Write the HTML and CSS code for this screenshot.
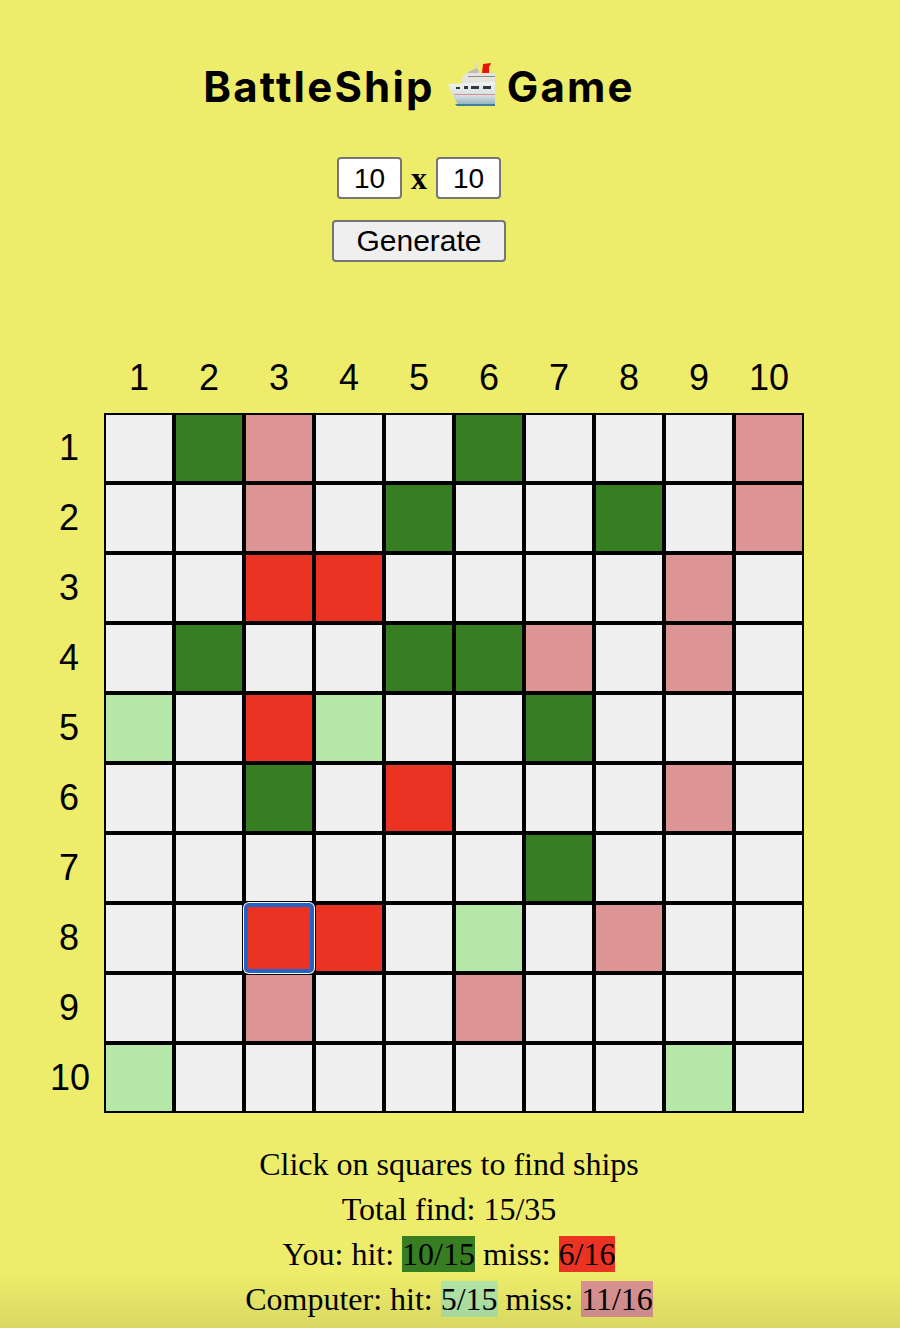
FILE: index.html
```html
<!DOCTYPE html>
<html lang="en">
<head>
    <meta charset="UTF-8">
    <meta name="viewport" content="width=device-width, initial-scale=1.0">
    <title>BattleShip Game</title>
    <link rel="stylesheet" href="styles.css">
</head>
<body>

    <div id="container-game">
        <h1 id="title">
            <span>BattleShip</span>
            <svg id="ship" viewBox="0 0 60 60" width="60" height="60" aria-hidden="true">
                <defs>
                    <linearGradient id="hull" x1="0" y1="0" x2="0" y2="1">
                        <stop offset="0" stop-color="#f1f3f3"/>
                        <stop offset="0.6" stop-color="#d5dfe2"/>
                        <stop offset="1" stop-color="#8fb0bd"/>
                    </linearGradient>
                </defs>
                <path d="M29 17 L33 6 L34 7 L32 17 Z" fill="#d9d9c8"/>
                <path d="M24 17 L33 13 L35 17 L35 22 L24 22 Z" fill="#bdbdb2"/>
                <path d="M39 9 L47 8 L46 11 L45 11 L45 18 L38 18 Z" fill="#e8140c"/>
                <path d="M18 23 L22 18 L51 18 L51 29 L18 29 Z" fill="#e4e4dc"/>
                <path d="M24 21 H51 V22 H24 Z" fill="#8d8d86"/>
                <path d="M4 29 L51 27 L51 50 L14 50 Q8 40 4 29 Z" fill="url(#hull)"/>
                <path d="M11 49 H51 V51 H13 Z" fill="#3f7f9c"/>
                <path d="M10 39 H51 V40 H10 Z" fill="#dc8c8c"/>
                <path d="M12 32 H16 V34 H12 Z M20 31 H24 V34 H20 Z M27 31 H35 V34 H27 Z M39 31 H47 V34 H39 Z" fill="#34383a"/>
            </svg>
            <span>Game</span>
        </h1>

        <div id="size-row">
            <input class="size-input" type="text" value="10">
            <span id="size-x">x</span>
            <input class="size-input" type="text" value="10">
        </div>

        <button id="btn-generate">Generate</button>

        <div id="board">
            <div class="labels-top">
                <span>1</span><span>2</span><span>3</span><span>4</span><span>5</span><span>6</span><span>7</span><span>8</span><span>9</span><span>10</span>
            </div>
            <div class="labels-left">
                <span>1</span><span>2</span><span>3</span><span>4</span><span>5</span><span>6</span><span>7</span><span>8</span><span>9</span><span class="label-wide">10</span>
            </div>
            <div id="grid">
                <button class="cell"></button><button class="cell hit"></button><button class="cell miss-pc"></button><button class="cell"></button><button class="cell"></button><button class="cell hit"></button><button class="cell"></button><button class="cell"></button><button class="cell"></button><button class="cell miss-pc"></button>
                <button class="cell"></button><button class="cell"></button><button class="cell miss-pc"></button><button class="cell"></button><button class="cell hit"></button><button class="cell"></button><button class="cell"></button><button class="cell hit"></button><button class="cell"></button><button class="cell miss-pc"></button>
                <button class="cell"></button><button class="cell"></button><button class="cell miss"></button><button class="cell miss"></button><button class="cell"></button><button class="cell"></button><button class="cell"></button><button class="cell"></button><button class="cell miss-pc"></button><button class="cell"></button>
                <button class="cell"></button><button class="cell hit"></button><button class="cell"></button><button class="cell"></button><button class="cell hit"></button><button class="cell hit"></button><button class="cell miss-pc"></button><button class="cell"></button><button class="cell miss-pc"></button><button class="cell"></button>
                <button class="cell hit-pc"></button><button class="cell"></button><button class="cell miss"></button><button class="cell hit-pc"></button><button class="cell"></button><button class="cell"></button><button class="cell hit"></button><button class="cell"></button><button class="cell"></button><button class="cell"></button>
                <button class="cell"></button><button class="cell"></button><button class="cell hit"></button><button class="cell"></button><button class="cell miss"></button><button class="cell"></button><button class="cell"></button><button class="cell"></button><button class="cell miss-pc"></button><button class="cell"></button>
                <button class="cell"></button><button class="cell"></button><button class="cell"></button><button class="cell"></button><button class="cell"></button><button class="cell"></button><button class="cell hit"></button><button class="cell"></button><button class="cell"></button><button class="cell"></button>
                <button class="cell"></button><button class="cell"></button><button class="cell miss selected"></button><button class="cell miss"></button><button class="cell"></button><button class="cell hit-pc"></button><button class="cell"></button><button class="cell miss-pc"></button><button class="cell"></button><button class="cell"></button>
                <button class="cell"></button><button class="cell"></button><button class="cell miss-pc"></button><button class="cell"></button><button class="cell"></button><button class="cell miss-pc"></button><button class="cell"></button><button class="cell"></button><button class="cell"></button><button class="cell"></button>
                <button class="cell hit-pc"></button><button class="cell"></button><button class="cell"></button><button class="cell"></button><button class="cell"></button><button class="cell"></button><button class="cell"></button><button class="cell"></button><button class="cell hit-pc"></button><button class="cell"></button>
            </div>
        </div>
    </div>

    <div id="score">
        <p>Click on squares to find ships</p>
        <p>Total find: 15/35</p>
        <p>You: hit: <span class="hit">10/15</span> miss: <span class="miss">6/16</span></p>
        <p>Computer: hit: <span class="hit-pc">5/15</span> miss: <span class="miss-pc">11/16</span></p>
    </div>

    <div id="bottom-shade"></div>

</body>
</html>
```

FILE: styles.css
```css
body {
    margin: 0;
    padding: 0;
    height: 1328px;
    overflow: hidden;
    background-color: #eeed6b;
    color: black;
    font-family: "Liberation Serif", serif;
}

#container-game {
    width: 838px;
    display: flex;
    flex-direction: column;
    align-items: center;
}

#title {
    margin: 58px 0 0 0;
    height: 56px;
    display: flex;
    align-items: center;
    justify-content: center;
    font-family: "Inter", sans-serif;
    font-size: 42px;
    font-weight: 700;
    letter-spacing: 2.2px;
}

#ship {
    width: 60px;
    height: 60px;
    margin: -2px 3px 0 9px;
}

#size-row {
    margin-top: 43px;
    display: flex;
    align-items: center;
    gap: 9px;
    font-size: 32px;
    font-weight: bold;
}

#size-x {
    line-height: 40px;
}

.size-input {
    box-sizing: border-box;
    width: 65px;
    height: 42px;
    padding: 2px 0 0 0;
    border: 2px solid #767676;
    border-radius: 4px;
    background-color: white;
    color: black;
    text-align: center;
    font-family: "Liberation Sans", sans-serif;
    font-size: 28px;
}

#btn-generate {
    box-sizing: border-box;
    margin-top: 21px;
    width: 174px;
    height: 42px;
    padding: 0;
    border: 2px solid #767676;
    border-radius: 4px;
    background-color: #efefef;
    color: black;
    font-family: "Liberation Sans", sans-serif;
    font-size: 30px;
}

#board {
    margin-top: 81px;
    display: grid;
    grid-template-columns: 70px 700px;
    grid-template-rows: 70px 700px;
    font-family: "Liberation Sans", sans-serif;
    font-size: 36px;
}

.labels-top {
    grid-column: 2;
    display: grid;
    grid-template-columns: repeat(10, 70px);
    align-items: center;
    justify-items: center;
}

.labels-left {
    grid-column: 1;
    grid-row: 2;
    display: grid;
    grid-template-rows: repeat(10, 70px);
    align-items: center;
    justify-items: center;
}

.label-wide {
    padding-left: 2px;
}

#grid {
    grid-column: 2;
    grid-row: 2;
    box-sizing: border-box;
    padding: 2px;
    display: grid;
    grid-template-columns: repeat(10, 66px);
    grid-template-rows: repeat(10, 66px);
    gap: 4px;
    background-color: black;
}

.cell {
    margin: 0;
    padding: 0;
    border: none;
    background-color: #efefef;
}

.hit {
    background-color: #377d22;
}

.miss {
    background-color: #ea3323;
}

.hit-pc {
    background-color: #b5e8a8;
}

.miss-pc {
    background-color: #dc9494;
}

.selected {
    position: relative;
    border-radius: 3px;
    box-shadow: inset 0 0 0 2px #2263c5, 0 0 0 2px #2263c5, 0 0 0 3px white;
}

#score {
    margin-top: 29px;
    padding-right: 2px;
    text-align: center;
    font-size: 32px;
    line-height: 45px;
}

#score p {
    margin: 0;
}

#bottom-shade {
    position: absolute;
    left: 0;
    right: 0;
    top: 1270px;
    height: 58px;
    background: linear-gradient(rgba(0, 0, 0, 0), rgba(0, 0, 0, 0.09));
    pointer-events: none;
}
```
